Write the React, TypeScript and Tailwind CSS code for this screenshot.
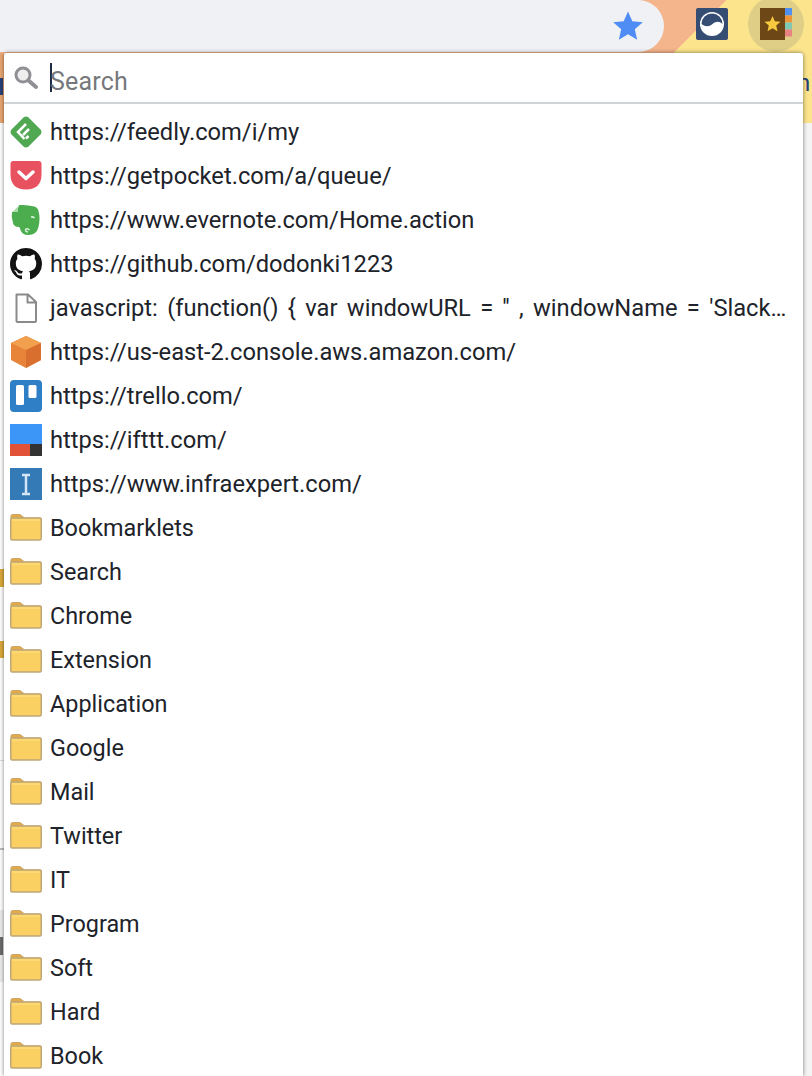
const bookmarks = [
  { icon: "feedly", label: "https://feedly.com/i/my" },
  { icon: "pocket", label: "https://getpocket.com/a/queue/" },
  { icon: "evernote", label: "https://www.evernote.com/Home.action" },
  { icon: "github", label: "https://github.com/dodonki1223" },
  { icon: "file", label: "javascript: (function() { var windowURL = '' , windowName = 'Slack…" },
  { icon: "aws", label: "https://us-east-2.console.aws.amazon.com/" },
  { icon: "trello", label: "https://trello.com/" },
  { icon: "ifttt", label: "https://ifttt.com/" },
  { icon: "infra", label: "https://www.infraexpert.com/" },
];

const folders = ["Bookmarklets", "Search", "Chrome", "Extension", "Application", "Google", "Mail", "Twitter", "IT", "Program", "Soft", "Hard", "Book"];

function Folder() {
  return (
    <svg width="32" height="28" viewBox="0 0 32 28" className="-mt-0.5 block">
      <path d="M1 6V3q0-1.500 1.500-1.500h7q1 0 2 1L14.500 5H30q1.300 0 1.300 1.500V6z" fill="#e3ab47" stroke="#c9a667" />
      <rect x="0.75" y="5" width="30.500" height="22" rx="1.500" fill="#fbd063" stroke="#bfa678" strokeWidth="1.500" />
      <rect x="2" y="6" width="28" height="2" fill="#fdd873" />
    </svg>
  );
}

function FavIcon({ name }: { name: string }) {
  if (name === "feedly") {
    return (
      <svg width="32" height="32" viewBox="0 0 32 32">
        <path d="M13.500 1.500q2.500-2 5 0l12 12q2 2.500 0 5l-12 12q-2.500 2-5 0l-12-12q-2-2.500 0-5z" fill="#51a852" />
        <path d="M16 8L8 16l6.500 7M19 13l-6 6M18.500 20l-2.500 2.500" fill="none" stroke="#fff" strokeWidth="2.500" />
      </svg>
    );
  }
  if (name === "pocket") {
    return (
      <svg width="32" height="32" viewBox="0 0 32 32">
        <path d="M3.500 1h25q3 0 3 3v10q0 15.500-15.500 15.500T.500 14V4q0-3 3-3z" fill="#e8515f" />
        <path d="M9 12l7 6.500 7-6.500" fill="none" stroke="#fff" strokeWidth="3.500" strokeLinecap="round" strokeLinejoin="round" />
      </svg>
    );
  }
  if (name === "evernote") {
    return (
      <svg width="32" height="32" viewBox="0 0 32 32">
        <path d="M9 1q-1.500 5-2 6.500L2 8q-1 5 1 11 1 4 6 4 1 0 1.500 3 1.500 5 8 5 8 0 10-8 2-9 0-16-.5-3-4-4.500Q18 1 13 1z" fill="#4bad4d" />
        <path d="M8 2.500V8H2.500z" fill="#a9dca9" />
        <path d="M18 28q-3.500-.5-2-3 2-1 3.500 1M21 13q2-.5 3.500 1" fill="none" stroke="#d6efd6" strokeWidth="1.500" />
      </svg>
    );
  }
  if (name === "github") {
    return (
      <svg width="32" height="32" viewBox="0 0 16 16">
        <path
          fill="#121212"
          d="M8 0C3.580 0 0 3.580 0 8c0 3.540 2.290 6.530 5.470 7.590.4.070.55-.17.550-.38 0-.19-.010-.82-.010-1.490-2.010.370-2.530-.490-2.690-.940-.090-.230-.480-.940-.820-1.130-.280-.150-.680-.520-.010-.530.630-.010 1.080.580 1.230.820.720 1.210 1.870.870 2.330.660.070-.520.280-.870.510-1.070-1.780-.200-3.640-.890-3.640-3.950 0-.870.310-1.590.820-2.150-.080-.200-.360-1.020.080-2.120 0 0 .670-.210 2.200.820.640-.180 1.320-.270 2-.270s1.360.090 2 .270c1.530-1.040 2.200-.820 2.200-.820.440 1.100.160 1.920.080 2.120.510.560.820 1.270.820 2.150 0 3.070-1.870 3.750-3.650 3.950.290.250.540.730.540 1.480 0 1.070-.010 1.930-.010 2.200 0 .210.150.460.550.380A8.010 8.010 0 0016 8c0-4.420-3.580-8-8-8z"
        />
      </svg>
    );
  }
  if (name === "file") {
    return (
      <svg width="32" height="32" viewBox="0 0 32 32">
        <path d="M6.500 2.500h11.500L26 10v19q0 1-1 1H7.500q-1 0-1-1zM17.500 3v7.500h8" fill="#fff" stroke="#8a8a8a" strokeWidth="2" strokeLinejoin="round" />
      </svg>
    );
  }
  if (name === "aws") {
    return (
      <svg width="32" height="32" viewBox="0 0 32 32">
        <path d="M16 0L31 7v17L16 32 1 24V7z" fill="#e8843a" />
        <path d="M16 0L31 7 16 14 1 7z" fill="#f2a04e" />
        <path d="M16 14L31 7v17L16 32z" fill="#d96f2e" />
      </svg>
    );
  }
  if (name === "trello") {
    return (
      <svg width="32" height="32" viewBox="0 0 32 32">
        <rect width="32" height="32" rx="4" fill="#2f7fc6" />
        <rect x="6" y="5" width="8" height="20" rx="1.500" fill="#fff" />
        <rect x="18.500" y="5" width="8" height="13" rx="1.500" fill="#fff" />
      </svg>
    );
  }
  if (name === "ifttt") {
    return (
      <svg width="32" height="32" viewBox="0 0 32 32">
        <rect width="32" height="20" fill="#3b96f8" />
        <rect y="20" width="20" height="12" fill="#e15238" />
        <rect x="20" y="20" width="12" height="12" fill="#333" />
      </svg>
    );
  }
  return (
    <svg width="32" height="32" viewBox="0 0 32 32">
      <rect width="32" height="32" fill="#337ab7" />
      <path d="M12 7h8M12 26h8M16 7v19" stroke="#d4e6f5" strokeWidth="2.500" fill="none" />
    </svg>
  );
}

export default function App() {
  return (
    <div className="h-[1076px] w-[812px] overflow-hidden bg-white font-['Roboto',sans-serif]">
      <div className="flex h-[53px] items-start bg-[linear-gradient(135deg,#f4b48c_514px,#fbe48c_514px)]">
        <div className="flex h-[52px] w-[664px] items-center justify-end rounded-r-[26px] bg-[#eff1f4] pr-[21px]">
          <svg width="30" height="30" viewBox="0 0 30 30">
            <path d="M15 0.500l4.300 9.800 10.500 1-8 7 2.400 10.500L15 23.300 5.800 28.800l2.400-10.500-8-7 10.500-1z" fill="#4f8df5" />
          </svg>
        </div>
        <svg width="32" height="32" viewBox="0 0 32 32" className="ml-8 mt-2">
          <rect width="32" height="32" rx="2" fill="#364d73" />
          <circle cx="16" cy="16" r="12" fill="#fff" />
          <path d="M5.500 16A10.500 10.500 0 0126.500 16c-3-3-6.500-3-10 0s-7 3-11 0z" fill="#364d73" />
        </svg>
        <div className="-mt-1 ml-5 flex h-14 w-14 items-center justify-center rounded-full bg-[#dfcf86]">
          <svg width="32" height="32" viewBox="0 0 32 32">
            <rect width="25" height="32" fill="#6d4715" />
            <rect x="25" width="7" height="7.500" fill="#4e90f2" />
            <rect x="25" y="7.500" width="7" height="7" fill="#ee9539" />
            <rect x="25" y="14.500" width="7" height="7" fill="#7fc9b4" />
            <rect x="25" y="21.500" width="7" height="7" fill="#e88181" />
            <path d="M12.500 8l2.300 5.300 5.700.5-4.300 3.800 1.300 5.600-5-3-5 3 1.300-5.600-4.300-3.800 5.700-.5z" fill="#f7c93e" />
          </svg>
        </div>
      </div>

      <div className="flex h-[1023px]">
        {/* page behind the popup, left edge */}
        <div className="flex w-1 shrink-0 flex-col">
          <div className="h-[70px] bg-[#eaa672] pt-[25px]">
            <div className="h-[17px] w-[3px] bg-[#26407a]" />
          </div>
          <div className="h-[446px]" />
          <div className="h-[18px] bg-[#dcaa3c]" />
          <div className="h-[54px]" />
          <div className="h-[17px] bg-[#dcaa3c]" />
          <div className="h-[102px]" />
          <div className="h-px bg-[#dcdcdc]" />
          <div className="h-[87px]" />
          <div className="h-0.5 bg-[#bdbdbd]" />
          <div className="h-[60px]" />
          <div className="h-[72px] bg-[#ececec]">
            <div className="mt-[27px] h-[18px] w-[3px] bg-[#6a6a6a]" />
          </div>
        </div>

        <div className="z-10 w-[799px] shrink-0 overflow-hidden rounded-t-[4px] bg-white shadow-[0_0_4px_rgba(0,0,0,0.5)]">
          <div className="flex h-[51px] items-center border-b-2 border-[#d1d4d7]">
            <svg width="26" height="26" viewBox="0 0 26 26" className="ml-[9px] mr-3 shrink-0">
              <circle cx="10" cy="10" r="7" fill="#eeeeef" stroke="#8f8f94" strokeWidth="3" />
              <path d="M15.500 15.500l7.500 6.500" stroke="#8f8f94" strokeWidth="4" strokeLinecap="round" />
            </svg>
            <span className="-ml-px h-[29px] w-0.5 bg-[#1f2a44]" />
            <span className="-ml-0.5 pt-2 text-[25px] leading-none tracking-[0.2px] text-[#76787c]">Search</span>
          </div>
          <ul className="pt-1.5">
            {bookmarks.map((b) => (
              <li key={b.label} className="flex h-11 items-center">
                <span className="ml-[6px] mr-2 flex w-8 shrink-0"><FavIcon name={b.icon} /></span>
                <span className={b.icon === "file" ? "whitespace-nowrap pt-px text-[23.7px] text-[#20232a] [word-spacing:3.5px]" : "whitespace-nowrap pt-px text-[23.7px] text-[#20232a]"}>{b.label}</span>
              </li>
            ))}
            {folders.map((f) => (
              <li key={f} className="flex h-11 items-center">
                <span className="ml-[6px] mr-2 flex w-8 shrink-0"><Folder /></span>
                <span className="whitespace-nowrap pt-px text-[23.4px] text-[#20232a]">{f}</span>
              </li>
            ))}
          </ul>
        </div>

        {/* page behind the popup, right edge */}
        <div className="w-[9px] shrink-0 bg-[#f4f4f4]">
          <div className="h-[70px] overflow-hidden bg-[#fbe48c] pt-[18px] text-[24px] leading-6 text-[#26407a]">
            <span className="-ml-1.5 block">n</span>
          </div>
        </div>
      </div>
    </div>
  );
}
